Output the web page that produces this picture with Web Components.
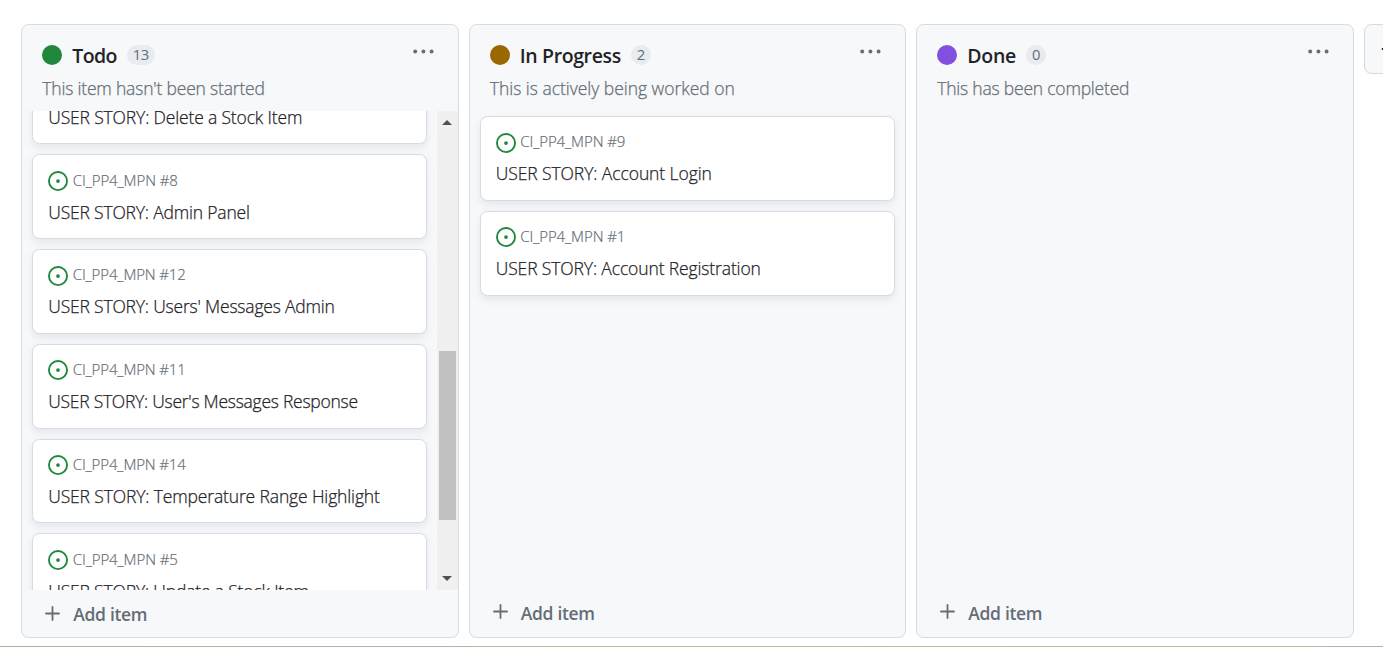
<!DOCTYPE html>
<html lang="en">
<head>
<meta charset="utf-8">
<title>Project board</title>
<style>
html,body{margin:0;height:100%;overflow:hidden;background:#fff}
body{font-family:"Open Sans","Noto Sans",sans-serif;color:#1f2328}
</style>
</head>
<body>
<project-board>
  <board-column name="Todo" name-width="44.5" count="13" note="This item hasn't been started" note-width="222.5" color="#1f883d" scrolling>
    <story-card number="8" hidden-ref name="Delete a Stock Item" fit="254"></story-card>
    <story-card number="8" name="Admin Panel" fit="201.5"></story-card>
    <story-card number="12" name="Users' Messages Admin" fit="286.5"></story-card>
    <story-card number="11" name="User's Messages Response" fit="309.5"></story-card>
    <story-card number="14" name="Temperature Range Highlight" fit="331.5"></story-card>
    <story-card number="5" name="Update a Stock Item" fit="260.5"></story-card>
  </board-column>
  <board-column name="In Progress" name-width="101" count="2" note="This is actively being worked on" note-width="245" color="#9a6700">
    <story-card number="9" name="Account Login" fit="216"></story-card>
    <story-card number="1" name="Account Registration" fit="265"></story-card>
  </board-column>
  <board-column name="Done" name-width="48.7" count="0" note="This has been completed" note-width="192" color="#8250df"></board-column>
  <new-column></new-column>
</project-board>
<script>
const define = (name, render, after) => customElements.define(name, class extends HTMLElement {
  connectedCallback() {
    if (this.shadowRoot) return;
    this.attachShadow({mode: 'open'}).innerHTML = render(this);
    if (after) after(this);
  }
});

/* A single line of text, tracked so that its advance equals the width attribute. */
define('fit-text', () => `<style>
  :host{display:block;white-space:nowrap}
  span{display:inline-block}
</style><span></span>`, el => {
  const s = el.shadowRoot.querySelector('span');
  s.textContent = el.getAttribute('text');
  const want = parseFloat(el.getAttribute('width'));
  const gap = (want - s.getBoundingClientRect().width) / s.textContent.length;
  s.style.letterSpacing = gap.toFixed(3) + 'px';
});

define('project-board', () => `<style>
  :host{display:flex;flex-direction:column;width:1383px;height:647px;overflow:hidden}
  .row{flex:1;display:flex;gap:10px;padding:24px 0 8px 21.25px;min-height:0;box-sizing:border-box}
  .edge{height:1px;flex:none;background:linear-gradient(90deg,#a9b89b,#b2b8a2 30%,#b3c197 65%,#b5bd9c 93%,#b0b2b0)}
</style><div class="row"><slot></slot></div><div class="edge"></div>`);

define('board-column', el => {
  const a = n => el.getAttribute(n);
  const bar = el.hasAttribute('scrolling');
  return `<style>
  :host{display:flex;flex-direction:column;flex:none;box-sizing:border-box;width:437.5px;height:614px;
    background:#f6f8fa;border:1px solid #d5dbe2;border-radius:7.5px;overflow:hidden}
  header{height:86px;flex:none;display:flex;justify-content:space-between;box-sizing:border-box;padding:20px 23.8px 0 20px}
  .title{display:flex;align-items:center;height:20px}
  .dot{width:20px;height:20px;border-radius:50%;background:${a('color')};flex:none}
  .name{margin:2px 0 0 10px;font-size:19.5px;font-weight:600;line-height:24px}
  .count{margin-left:10px;min-width:20px;height:20px;box-sizing:border-box;padding:0 6px;border-radius:10px;
    background:#e8ebef;color:#656d76;font-size:14.8px;font-weight:500;line-height:19px;text-align:center;letter-spacing:-.5px}
  .note{margin-top:11px;font-size:17.5px;font-weight:300;line-height:24px;color:#656d76;-webkit-text-stroke:.25px #656d76}
  .more{display:block;margin-top:4px}
  main{flex:1;min-height:0;display:flex;overflow:hidden}
  .cards{flex:1;min-width:0;display:flex;flex-direction:column;gap:10px;padding:${bar ? '0 10px' : '5px 10px'};overflow:hidden}
  .first{margin:-51.6px 0 -10px}
  footer{height:${bar ? 47 : 49}px;flex:none;display:flex;align-items:center;gap:13px;padding-left:23px;box-sizing:border-box;
    color:#656d76;font-size:17.5px;font-weight:600;line-height:24px}
  footer svg{margin-bottom:${bar ? 0 : 2}px}
  footer fit-text{margin-top:1px}
  </style>
  <header><div>
    <div class="title"><div class="dot"></div><fit-text class="name" text="${a('name')}" width="${a('name-width')}"></fit-text><div class="count">${a('count')}</div></div>
    <fit-text class="note" text="${a('note')}" width="${a('note-width')}"></fit-text>
  </div>
  <svg class="more" width="21" height="5" viewBox="0 0 21 5" fill="#656d76"><circle cx="2.2" cy="2.5" r="1.95"/><circle cx="10.4" cy="2.5" r="1.95"/><circle cx="18.6" cy="2.5" r="1.95"/></svg>
  </header>
  <main><div class="cards">${bar ? '<div class="first"></div>' : ''}<slot></slot></div>${bar ? '<scroll-rail></scroll-rail>' : ''}</main>
  <footer><svg width="15" height="15" viewBox="0 0 15 15" fill="none" stroke="#656d76" stroke-width="1.8" stroke-linecap="round"><path d="M7.5 1v13M1 7.5h13"/></svg><fit-text text="Add item" width="74"></fit-text></footer>`;
});

define('scroll-rail', () => `<style>
  :host{display:flex;flex-direction:column;align-items:center;flex:none;width:21.25px;background:#f0f0f0;box-sizing:border-box;padding:9px 0 9px}
  .thumb{width:17px;height:169px;margin-top:226px;margin-bottom:auto;background:#c1c1c1}
  svg{display:block;flex:none}
</style><svg width="10" height="5"><path d="M0 5L5 0l5 5z" fill="#505050"/></svg><div class="thumb"></div><svg width="10" height="5"><path d="M0 0l5 5 5-5z" fill="#505050"/></svg>`);

define('story-card', el => `<style>
  :host{display:block;flex:none;box-sizing:border-box;height:84.8px;background:#fff;border:1px solid #d5dbe2;border-radius:7.5px;
    box-shadow:0 3.75px 7.5px rgba(140,149,159,.15);padding:15px}
  .ref{display:flex;gap:4.5px;height:21px;align-items:flex-start;color:#656d76;font-size:15px;font-weight:300;line-height:20px;-webkit-text-stroke:.2px #656d76}
  .ref svg{display:block;flex:none;margin-top:.5px}
  .ref fit-text{margin-top:-.7px}
  .name{margin-top:8.3px;font-size:17.5px;font-weight:300;line-height:24px;color:#1f2328;-webkit-text-stroke:.25px #1f2328}
</style>
<div class="ref">${el.hasAttribute('hidden-ref') ? '' : `<svg width="20" height="20" viewBox="0 0 16 16" fill="#1f883d"><circle cx="8" cy="8" r="1.5"/><path d="M8 0a8 8 0 1 1 0 16A8 8 0 0 1 8 0ZM1.5 8a6.5 6.5 0 1 0 13 0 6.5 6.5 0 0 0-13 0Z"/></svg><fit-text text="CI_PP4_MPN #${el.getAttribute('number')}" width="${el.getAttribute('number').length > 1 ? 113 : 105}"></fit-text>`}</div>
<fit-text class="name" text="USER STORY: ${el.getAttribute('name')}" width="${el.getAttribute('fit')}"></fit-text>`);

define('new-column', () => `<style>
  :host{display:flex;align-items:center;flex:none;box-sizing:border-box;width:50px;height:50px;padding-left:16px;background:#f6f8fa;border:1px solid #d7dade;border-radius:7.5px}
  svg{display:block}
</style><svg width="16" height="16" viewBox="0 0 16 16" fill="none" stroke="#24292f" stroke-width="1.8" stroke-linecap="round"><path d="M8 1.5v13M1.5 8h13"/></svg>`);
</script>
</body>
</html>
